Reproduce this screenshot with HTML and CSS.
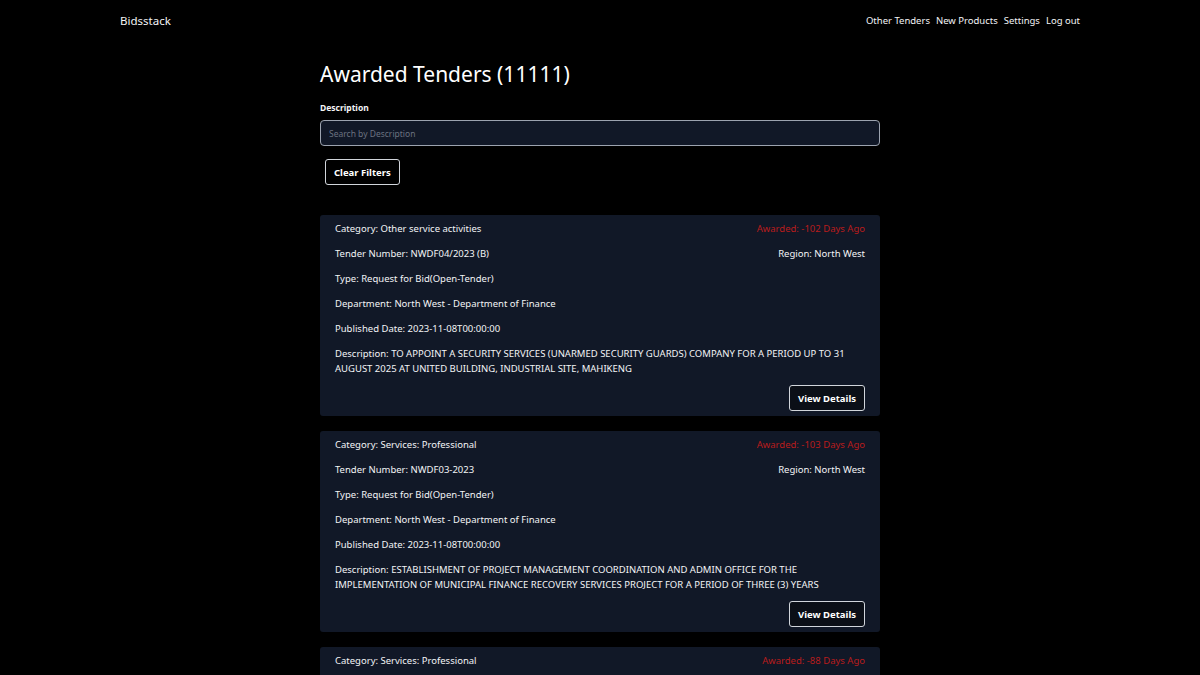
FILE: index.html
```html
<!DOCTYPE html>
<html lang="en">

<head>
  <meta charset="UTF-8">
  <meta name="viewport" content="width=device-width, initial-scale=1.0">
  <title>Bidsstack - Awarded Tenders</title>
  <link rel="stylesheet" href="styles.css">
</head>

<body>
  <!-- top bar -->
  <nav class="topbar">
    <a href="#" class="brand">Bidsstack</a>
    <div class="links">
      <a href="#">Other Tenders</a>
      <a href="#">New Products</a>
      <a href="#">Settings</a>
      <a href="#">Log out</a>
    </div>
  </nav>

  <main class="content">
    <h1>Awarded Tenders (11111)</h1>

    <div class="filters">
      <label for="desc">Description</label>
      <input type="text" id="desc" placeholder="Search by Description">
      <button class="btn">Clear Filters</button>
    </div>

    <div class="tender-list">
      <div class="tender-card">
        <div class="row">
          <p>Category: Other service activities</p>
          <p class="awarded">Awarded: -102 Days Ago</p>
        </div>
        <div class="row">
          <p>Tender Number: NWDF04/2023 (B)</p>
          <p>Region: North West</p>
        </div>
        <p>Type: Request for Bid(Open-Tender)</p>
        <p>Department: North West - Department of Finance</p>
        <p>Published Date: 2023-11-08T00:00:00</p>
        <p>Description: TO APPOINT A SECURITY SERVICES (UNARMED SECURITY GUARDS) COMPANY FOR A PERIOD UP TO 31 AUGUST 2025 AT UNITED BUILDING, INDUSTRIAL SITE, MAHIKENG</p>
        <div class="actions"><button class="btn">View Details</button></div>
      </div>

      <div class="tender-card">
        <div class="row">
          <p>Category: Services: Professional</p>
          <p class="awarded">Awarded: -103 Days Ago</p>
        </div>
        <div class="row">
          <p>Tender Number: NWDF03-2023</p>
          <p>Region: North West</p>
        </div>
        <p>Type: Request for Bid(Open-Tender)</p>
        <p>Department: North West - Department of Finance</p>
        <p>Published Date: 2023-11-08T00:00:00</p>
        <p>Description: ESTABLISHMENT OF PROJECT MANAGEMENT COORDINATION AND ADMIN OFFICE FOR THE IMPLEMENTATION OF MUNICIPAL FINANCE RECOVERY SERVICES PROJECT FOR A PERIOD OF THREE (3) YEARS</p>
        <div class="actions"><button class="btn">View Details</button></div>
      </div>

      <div class="tender-card">
        <div class="row">
          <p>Category: Services: Professional</p>
          <p class="awarded">Awarded: -88 Days Ago</p>
        </div>
        <div class="row">
          <p>Tender Number: NWDF02-2023</p>
          <p>Region: North West</p>
        </div>
        <p>Type: Request for Bid(Open-Tender)</p>
        <p>Department: North West - Department of Finance</p>
      </div>
    </div>
  </main>
</body>

</html>
```

FILE: styles.css
```css
* {
  box-sizing: border-box;
  margin: 0;
  padding: 0;
}

body {
  background: #000;
  color: #f3f4f6;
  font-family: 'Noto Sans', sans-serif;
  height: 675px;
  overflow: hidden;
}

/* top bar */
.topbar {
  display: flex;
  justify-content: space-between;
  align-items: center;
  height: 40px;
  padding: 0 120px;
}

.topbar a {
  color: #f3f4f6;
  text-decoration: none;
}

.brand {
  font-size: 11.5px;
}

.links {
  display: flex;
  gap: 6px;
  font-size: 9.5px;
}

/* main column */
.content {
  width: 560px;
  margin: 0 auto;
  padding-top: 18px;
}

h1 {
  font-size: 21px;
  font-weight: 400;
  line-height: 32px;
  color: #fff;
}

.filters {
  margin-top: 12px;
}

.filters label {
  display: block;
  font-size: 8.5px;
  font-weight: 700;
  line-height: 12px;
}

.filters input {
  display: block;
  width: 100%;
  height: 26px;
  margin-top: 6px;
  padding: 0 8px;
  background: #111827;
  border: 1px solid #9ca3af;
  border-radius: 4px;
  color: #fff;
  font-family: inherit;
  font-size: 8.5px;
}

.filters input::placeholder {
  color: #6b7280;
}

.btn {
  background: #000;
  color: #fff;
  border: 1px solid #d1d5db;
  border-radius: 3px;
  font-family: inherit;
  font-size: 9.5px;
  font-weight: 700;
  height: 26px;
  padding: 0 8px;
}

.filters .btn {
  margin: 13px 0 0 5px;
  background: transparent;
}

/* tender cards */
.tender-list {
  display: flex;
  flex-direction: column;
  gap: 15px;
  margin-top: 30px;
}

.tender-card {
  background: #111827;
  border-radius: 3px;
  padding: 6px 15px 5px;
  font-size: 9.5px;
  line-height: 15px;
}

.tender-card p {
  margin-bottom: 10px;
}

.row {
  display: flex;
  justify-content: space-between;
}

.awarded {
  color: #b91c1c;
}

.actions {
  display: flex;
  justify-content: flex-end;
  margin-top: -1px;
}

.actions .btn {
  background: #0b0f17;
}
```
